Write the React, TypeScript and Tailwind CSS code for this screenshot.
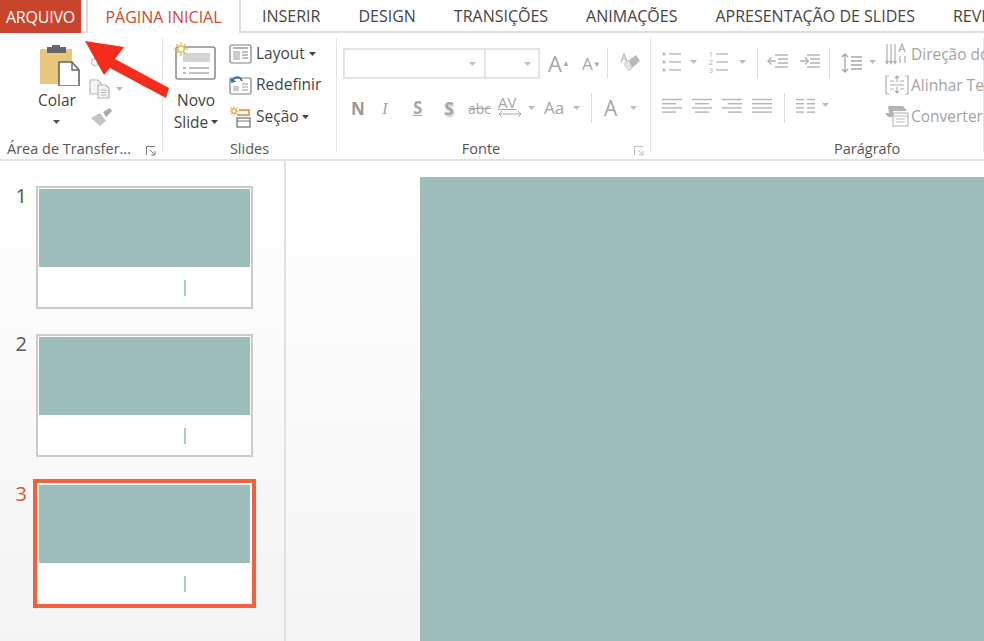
import type { ReactNode } from 'react';

const TABS = ['INSERIR', 'DESIGN', 'TRANSIÇÕES', 'ANIMAÇÕES', 'APRESENTAÇÃO DE SLIDES', 'REVISÃO'];

function Caret({ className = '' }: { className?: string }) {
  return (
    <svg width="7" height="4" viewBox="0 0 7 4" className={className}>
      <path d="M0 0h7L3.5 4z" fill="currentColor" />
    </svg>
  );
}

function Sep({ className = '' }: { className?: string }) {
  return <div className={`w-px h-[30px] bg-[#dcdcdc] ${className}`} />;
}

function Launcher({ color = '#777' }: { color?: string }) {
  return (
    <svg width="10" height="10" viewBox="0 0 10 10" fill="none" stroke={color}>
      <path d="M.5 9V.5H9" />
      <path d="M4 4l4.5 4.5M9 5v4H5" />
    </svg>
  );
}

function Lines({ rows, w = 20 }: { rows: [number, number][]; w?: number }) {
  return (
    <svg width={w} height="18" viewBox={`0 0 ${w} 18`} stroke="#b4b4b4" strokeWidth="1.4">
      {rows.map(([x, len], i) => (
        <path key={i} d={`M${x} ${2.5 + i * 4.2}h${len}`} />
      ))}
    </svg>
  );
}

function PasteIcon() {
  return (
    <svg width="42" height="42" viewBox="0 0 42 42">
      <path d="M1 5h32v35H1z" fill="#e9c67e" />
      <path d="M8 3h19v6H8z" fill="#666" />
      <path d="M13 6V1h8v5z" fill="#666" />
      <path d="M20 18h13l7 8v16H20z" fill="#fff" stroke="#666" strokeWidth="1.6" />
      <path d="M33 18v8h7" fill="none" stroke="#666" strokeWidth="1.4" />
    </svg>
  );
}

function ScissorsIcon() {
  return (
    <svg width="20" height="22" viewBox="0 0 20 22" fill="none" stroke="#c4c4c4" strokeWidth="1.300">
      <circle cx="5" cy="16" r="3.500" />
      <path d="M7 13l9-11" />
    </svg>
  );
}

function CopyIcon() {
  return (
    <svg width="22" height="20" viewBox="0 0 22 20" fill="#f4f4f4" stroke="#b5b5b5" strokeWidth="1.2">
      <path d="M1 1h8l3 3v11H1z" />
      <path d="M9 6h8l3 3v10H9z" />
      <path d="M11.500 11h6M11.500 13.500h6M11.500 16h6" />
    </svg>
  );
}

function BrushIcon() {
  return (
    <svg width="24" height="20" viewBox="0 0 24 20">
      <path d="M1 11l9-5 6 8-6 5z" fill="#c4c4c4" />
      <path d="M13 5l7-4 2 3-6 6z" fill="#a9a9a9" />
    </svg>
  );
}

function SunBurst({ x = 7, y = 7, r = 6 }: { x?: number; y?: number; r?: number }) {
  return (
    <g stroke="#e8b552" strokeWidth="1.3">
      {[0, 45, 90, 135].map((a) => (
        <path key={a} d={`M${x - r} ${y}h${2 * r}`} transform={`rotate(${a} ${x} ${y})`} />
      ))}
      <circle cx={x} cy={y} r={r / 2.2} fill="#fff" />
    </g>
  );
}

function NewSlideIcon() {
  return (
    <svg width="44" height="40" viewBox="0 0 44 40" fill="none">
      <rect x="3" y="6" width="39" height="32" rx="2" fill="#fff" stroke="#909090" strokeWidth="1.6" />
      <path d="M10 12h27v9H10z" fill="#d4d4d4" />
      <path d="M10 27h3M16 27h20M10 32h3M16 32h20" stroke="#aaa" strokeWidth="1.300" />
      <SunBurst x={8} y={8} r={7} />
    </svg>
  );
}

function LayoutIcon() {
  return (
    <svg width="23" height="20" viewBox="0 0 23 20" fill="#fff" stroke="#808080" strokeWidth="1.2">
      <rect x="1" y="1" width="21" height="18" rx="1.500" />
      <path d="M4 4h15" />
      <path d="M4 7h7v9H4z" fill="#ccc" stroke="none" />
      <path d="M13 8h6M13 11h6M13 14h6" />
    </svg>
  );
}

function ResetIcon() {
  return (
    <svg width="23" height="20" viewBox="0 0 23 20" fill="none">
      <rect x="1" y="3" width="21" height="16" rx="1.500" fill="#fff" stroke="#808080" strokeWidth="1.2" />
      <path d="M4 11h6v5H4z" fill="#ccc" />
      <path d="M13 9h6M13 12h6M13 15h6" stroke="#999" />
      <path d="M3 6c3-5 8-5 10 0" stroke="#2d75b5" strokeWidth="1.8" />
      <path d="M1 3l1.500 5 5-1.500z" fill="#2d75b5" />
    </svg>
  );
}

function SectionIcon() {
  return (
    <svg width="24" height="22" viewBox="0 0 24 22" fill="none">
      <SunBurst x={5} y={5} r={4.500} />
      <path d="M10 4h10v5H8" stroke="#d9843b" strokeWidth="1.500" />
      <rect x="8" y="12" width="13" height="9" fill="#fff" stroke="#777" strokeWidth="1.300" />
      <path d="M8 15h13" stroke="#777" />
    </svg>
  );
}

function EraserIcon() {
  return (
    <svg width="22" height="24" viewBox="0 0 22 24">
      <path d="M10 9l7-5 4 6-8 7z" fill="#b9b9b9" />
      <path d="M5 13l5-4 3 8-3 3z" fill="#e6e6e6" stroke="#c6c6c6" />
      <path d="M2 11l3-8 3 8M3.500 8h3" fill="none" stroke="#b4b4b4" strokeWidth="1.200" />
    </svg>
  );
}

function BulletIcon({ numbered = false }: { numbered?: boolean }) {
  return (
    <svg width="20" height="22" viewBox="0 0 20 22" stroke="#b4b4b4" fill="#b4b4b4">
      {[3, 11, 19].map((y, i) => (
        <g key={y}>
          {numbered ? (
            <text x="0" y={y + 2.5} fontSize="7" stroke="none" fill="#a8a8a8" fontFamily="Open Sans">{i + 1}</text>
          ) : (
            <circle cx="2" cy={y} r="1.500" stroke="none" />
          )}
          <path d={`M7 ${y}h12`} strokeWidth="1.300" />
        </g>
      ))}
    </svg>
  );
}

function IndentIcon({ flip = false }: { flip?: boolean }) {
  return (
    <svg width="22" height="16" viewBox="0 0 22 16" stroke="#b4b4b4" fill="none" strokeWidth="1.300">
      <path d="M8 1h13M11 5h10M11 9h10M8 13h13" />
      {flip ? <path d="M1 7h8M6 3.500L9.500 7 6 10.500" /> : <path d="M9 7H1M4.500 3.500L1 7l3.500 3.500" />}
    </svg>
  );
}

function LineSpacingIcon() {
  return (
    <svg width="22" height="22" viewBox="0 0 22 22" stroke="#a5a5a5" fill="none" strokeWidth="1.300">
      <path d="M4 2v18M1 5l3-3 3 3M1 17l3 3 3-3" />
      <path d="M10 5h11M10 9h11M10 13h11M10 17h11" />
    </svg>
  );
}

function TextDirIcon() {
  return (
    <svg width="24" height="22" viewBox="0 0 24 22" stroke="#adadad" fill="none" strokeWidth="1.200">
      <path d="M2 1v19M6 1v19M10 1v19M.5 18L2 20.500 3.500 18M4.500 18L6 20.500 7.500 18M8.500 18L10 20.500 11.500 18" />
      <path d="M14 9l3-8 3 8M15 6.500h4M15 13v7M20 13v7" />
    </svg>
  );
}

function AlignTextIcon() {
  return (
    <svg width="24" height="20" viewBox="0 0 24 20" stroke="#adadad" fill="#f6f6f6" strokeWidth="1.200">
      <path d="M4 1H1v18h3M20 1h3v18h-3" fill="none" />
      <path d="M5 6h4M15 6h4M5 10h14M5 14h4M15 14h4" />
      <path d="M12 1v6M10 3l2-2 2 2M12 12v6M10 16l2 2 2-2" fill="none" />
    </svg>
  );
}

function ConvertIcon() {
  return (
    <svg width="24" height="22" viewBox="0 0 24 22">
      <path d="M3 1h15l4 5H8v6H3L0 8h4z" fill="#b4b4b4" />
      <rect x="8" y="8" width="15" height="13" fill="#fff" stroke="#adadad" />
      <path d="M8 11h15M11 14h9M11 17h9" stroke="#bdbdbd" />
    </svg>
  );
}

function Group({ w, label, launcher, labelClass = '', children }: { w: string; label: string; launcher?: string; labelClass?: string; children: ReactNode }) {
  return (
    <div className={`relative flex flex-col shrink-0 ${w} border-r border-[#e2e2e2] mt-[5px] mb-[7px]`}>
      <div className="flex-1 relative">{children}</div>
      <div className={`flex items-center h-[20px] -mb-[7px] text-[14.500px] leading-[20px] text-[#555] ${labelClass}`}>
        {label}
        {launcher && <span className="absolute right-[6px] bottom-[-4px]"><Launcher color={launcher} /></span>}
      </div>
    </div>
  );
}

function Thumb({ n, top, active = false }: { n: number; top: string; active?: boolean }) {
  return (
    <div className={`flex items-start ${top}`}>
      <div className={`w-[27px] text-right text-[20px] leading-[20px] ${active ? 'text-[#d9542f] mt-[5px]' : 'text-[#555]'}`}>{n}</div>
      <div className={active ? 'ml-[6px] w-[223px] h-[129px] border-[4px] border-[#f1623c] bg-white p-[2px]' : 'ml-[9px] w-[217px] h-[123px] border-2 border-[#cbcbcb] bg-white p-[1px]'}>
        <div className="h-[78px] bg-[#9dbdbb]" />
        <div className="flex justify-center pt-[13px]">
          <div className="ml-[80px] w-[2px] h-[16px] bg-[#a9cbc8]" />
        </div>
      </div>
    </div>
  );
}

function Tool({ className, children }: { className: string; children: ReactNode }) {
  return <div className={`absolute flex items-center ${className}`}>{children}</div>;
}

export default function App() {
  return (
    <div className="relative w-[984px] h-[641px] overflow-hidden bg-white font-['Open_Sans','Liberation_Sans',sans-serif]">
      {/* abas */}
      <div className="flex h-[33px] border-b-2 border-[#dedede] text-[16px] text-[#444] whitespace-nowrap">
        <div className="w-[81px] h-[33px] bg-[#c8452c] text-white flex items-center justify-center shrink-0 tracking-[-0.2px]">ARQUIVO</div>
        <div className="ml-[5px] w-[155px] h-[33px] bg-white border-x-2 border-[#dedede] text-[#d2472c] flex items-center justify-center shrink-0">PÁGINA INICIAL</div>
        <div className="flex items-center gap-[38px] pl-[21px]">
          {TABS.map((t) => (
            <div key={t} className="shrink-0">{t}</div>
          ))}
        </div>
      </div>

      {/* faixa de opções */}
      <div className="flex h-[128px] border-b-2 border-[#e2e2e2] overflow-hidden">
        <Group w="w-[163px]" label="Área de Transfer..." launcher="#777" labelClass="pl-[7px]">
          <Tool className="left-[39px] top-[6px]"><PasteIcon /></Tool>
          <Tool className="left-[38px] top-[51px] text-[15.500px] text-[#444]">Colar</Tool>
          <Tool className="left-[53px] top-[82px] text-[#555]"><Caret /></Tool>
          <Tool className="left-[90px] top-[8px]"><ScissorsIcon /></Tool>
          <Tool className="left-[89px] top-[41px] text-[#bbb] gap-[4px]"><CopyIcon /><Caret className="ml-[1px]" /></Tool>
          <Tool className="left-[90px] top-[69px]"><BrushIcon /></Tool>
        </Group>

        <Group w="w-[174px]" label="Slides" labelClass="justify-center">
          <Tool className="left-[10px] top-[3px]"><NewSlideIcon /></Tool>
          <div className="absolute left-[8px] top-[51px] w-[50px] flex flex-col items-center text-[15.500px] leading-[22px] text-[#444]">
            <span>Novo</span>
            <span className="flex items-center gap-[3px] whitespace-nowrap">Slide<Caret /></span>
          </div>
          <div className="absolute left-[66px] top-[6px] flex flex-col gap-[11px] text-[15.500px] text-[#444]">
            <div className="flex items-center gap-[4px] h-[20px]"><LayoutIcon />Layout<Caret /></div>
            <div className="flex items-center gap-[4px] h-[20px]"><ResetIcon />Redefinir</div>
            <div className="flex items-center gap-[3px] h-[22px]"><SectionIcon />Seção<Caret /></div>
          </div>
        </Group>

        <Group w="w-[314px]" label="Fonte" launcher="#bbb" labelClass="justify-center pr-[25px]">
          <div className="absolute left-[6px] top-[10px] flex h-[31px] w-[197px] border-2 border-[#e4e4e4] text-[#c2c2c2]">
            <div className="w-[141px] border-r-2 border-[#e4e4e4] flex items-center justify-end pr-[8px]"><Caret /></div>
            <div className="flex-1 flex items-center justify-end pr-[7px]"><Caret /></div>
          </div>
          <Tool className="left-[211px] top-[12px] text-[22px] leading-[26px] text-[#a8a8a8]">A<span className="text-[8px] self-start">▲</span></Tool>
          <Tool className="left-[245px] top-[15px] text-[17px] leading-[22px] text-[#a8a8a8]">A<span className="text-[8px] self-start">▼</span></Tool>
          <Sep className="absolute left-[270px] top-[10px]" />
          <Tool className="left-[282px] top-[13px]"><EraserIcon /></Tool>

          <div className="absolute left-0 top-[55px] text-[#a6a6a6]">
            <Tool className="left-[14px] top-[3px] text-[17px] font-bold text-[#999]">N</Tool>
            <Tool className="left-[45px] top-[3px] text-[17px] italic font-['Liberation_Serif',serif]">I</Tool>
            <Tool className="left-[76px] top-[2px] text-[17px] font-bold underline">S</Tool>
            <Tool className="left-[107px] top-[2px] text-[18px] font-bold [text-shadow:1px_2px_2px_#ccc]">S</Tool>
            <Tool className="left-[131px] top-[5px] text-[14px] line-through">abc</Tool>
            <Tool className="left-[161px] top-[2px] flex-col text-[15px] leading-[15px] underline">AV</Tool>
            <Tool className="left-[161px] top-[17px]">
              <svg width="24" height="8" viewBox="0 0 24 8" fill="none" stroke="#a6a6a6"><path d="M1 4h22M4 1L1 4l3 3M20 1l3 3-3 3" /></svg>
            </Tool>
            <Tool className="left-[191px] top-[13px] text-[#bbb]"><Caret /></Tool>
            <Tool className="left-[207px] top-[2px] text-[17px]">Aa</Tool>
            <Tool className="left-[236px] top-[13px] text-[#bbb]"><Caret /></Tool>
            <Sep className="absolute left-[254px] top-0" />
            <Tool className="left-[267px] top-[0px] text-[21px]">A</Tool>
            <Tool className="left-[293px] top-[13px] text-[#bbb]"><Caret /></Tool>
          </div>
        </Group>

        <Group w="w-[333px]" label="Parágrafo" labelClass="justify-start pl-[183px]">
          <Tool className="left-[11px] top-[13px]"><BulletIcon /></Tool>
          <Tool className="left-[39px] top-[22px] text-[#bbb]"><Caret /></Tool>
          <Tool className="left-[58px] top-[13px]"><BulletIcon numbered /></Tool>
          <Tool className="left-[88px] top-[22px] text-[#bbb]"><Caret /></Tool>
          <Sep className="absolute left-[106px] top-[10px]" />
          <Tool className="left-[116px] top-[16px]"><IndentIcon /></Tool>
          <Tool className="left-[148px] top-[16px]"><IndentIcon flip /></Tool>
          <Sep className="absolute left-[178px] top-[10px]" />
          <Tool className="left-[190px] top-[14px]"><LineSpacingIcon /></Tool>
          <Tool className="left-[218px] top-[22px] text-[#bbb]"><Caret /></Tool>

          <Tool className="left-[11px] top-[59px]"><Lines rows={[[0, 20], [0, 14], [0, 20], [0, 14]]} /></Tool>
          <Tool className="left-[41px] top-[59px]"><Lines rows={[[0, 20], [3, 14], [0, 20], [3, 14]]} /></Tool>
          <Tool className="left-[71px] top-[59px]"><Lines rows={[[0, 20], [6, 14], [0, 20], [6, 14]]} /></Tool>
          <Tool className="left-[101px] top-[59px]"><Lines rows={[[0, 20], [0, 20], [0, 20], [0, 20]]} /></Tool>
          <Sep className="absolute left-[133px] top-[55px]" />
          <Tool className="left-[145px] top-[59px] gap-[2px]"><Lines rows={[[0, 8], [0, 8], [0, 8], [0, 8]]} w={9} /><Lines rows={[[0, 8], [0, 8], [0, 8], [0, 8]]} w={9} /></Tool>
          <Tool className="left-[171px] top-[65px] text-[#bbb]"><Caret /></Tool>

          <div className="absolute left-[234px] top-[5px] flex flex-col gap-[9px] text-[15.500px] leading-[22px] text-[#a3a3a3] whitespace-nowrap">
            <div className="flex items-center gap-[2px] h-[22px]"><TextDirIcon />Direção do Texto</div>
            <div className="flex items-center gap-[2px] h-[22px]"><AlignTextIcon />Alinhar Texto</div>
            <div className="flex items-center gap-[2px] h-[22px]"><ConvertIcon />Converter em SmartArt</div>
          </div>
        </Group>
      </div>

      {/* corpo */}
      <div className="flex h-[480px]">
        <div className="w-[286px] shrink-0 border-r-2 border-[#e0e0e0] bg-gradient-to-b from-white to-[#f4f4f4] pt-[25px]">
          <Thumb n={1} top="" />
          <Thumb n={2} top="mt-[25px]" />
          <Thumb n={3} top="mt-[22px]" active />
        </div>
        <div className="flex-1 bg-gradient-to-b from-white to-[#f5f5f5] pt-[16px] pl-[134px]">
          <div className="h-[480px] w-[600px] bg-[#9dbdbb]" />
        </div>
      </div>

      {/* seta vermelha */}
      <svg className="absolute left-0 top-0 pointer-events-none" width="984" height="160" viewBox="0 0 984 160">
        <path d="M85 41l39 6-9 12 54 29-3 10-56-30-6 7z" fill="#f42c1c" />
      </svg>
    </div>
  );
}
